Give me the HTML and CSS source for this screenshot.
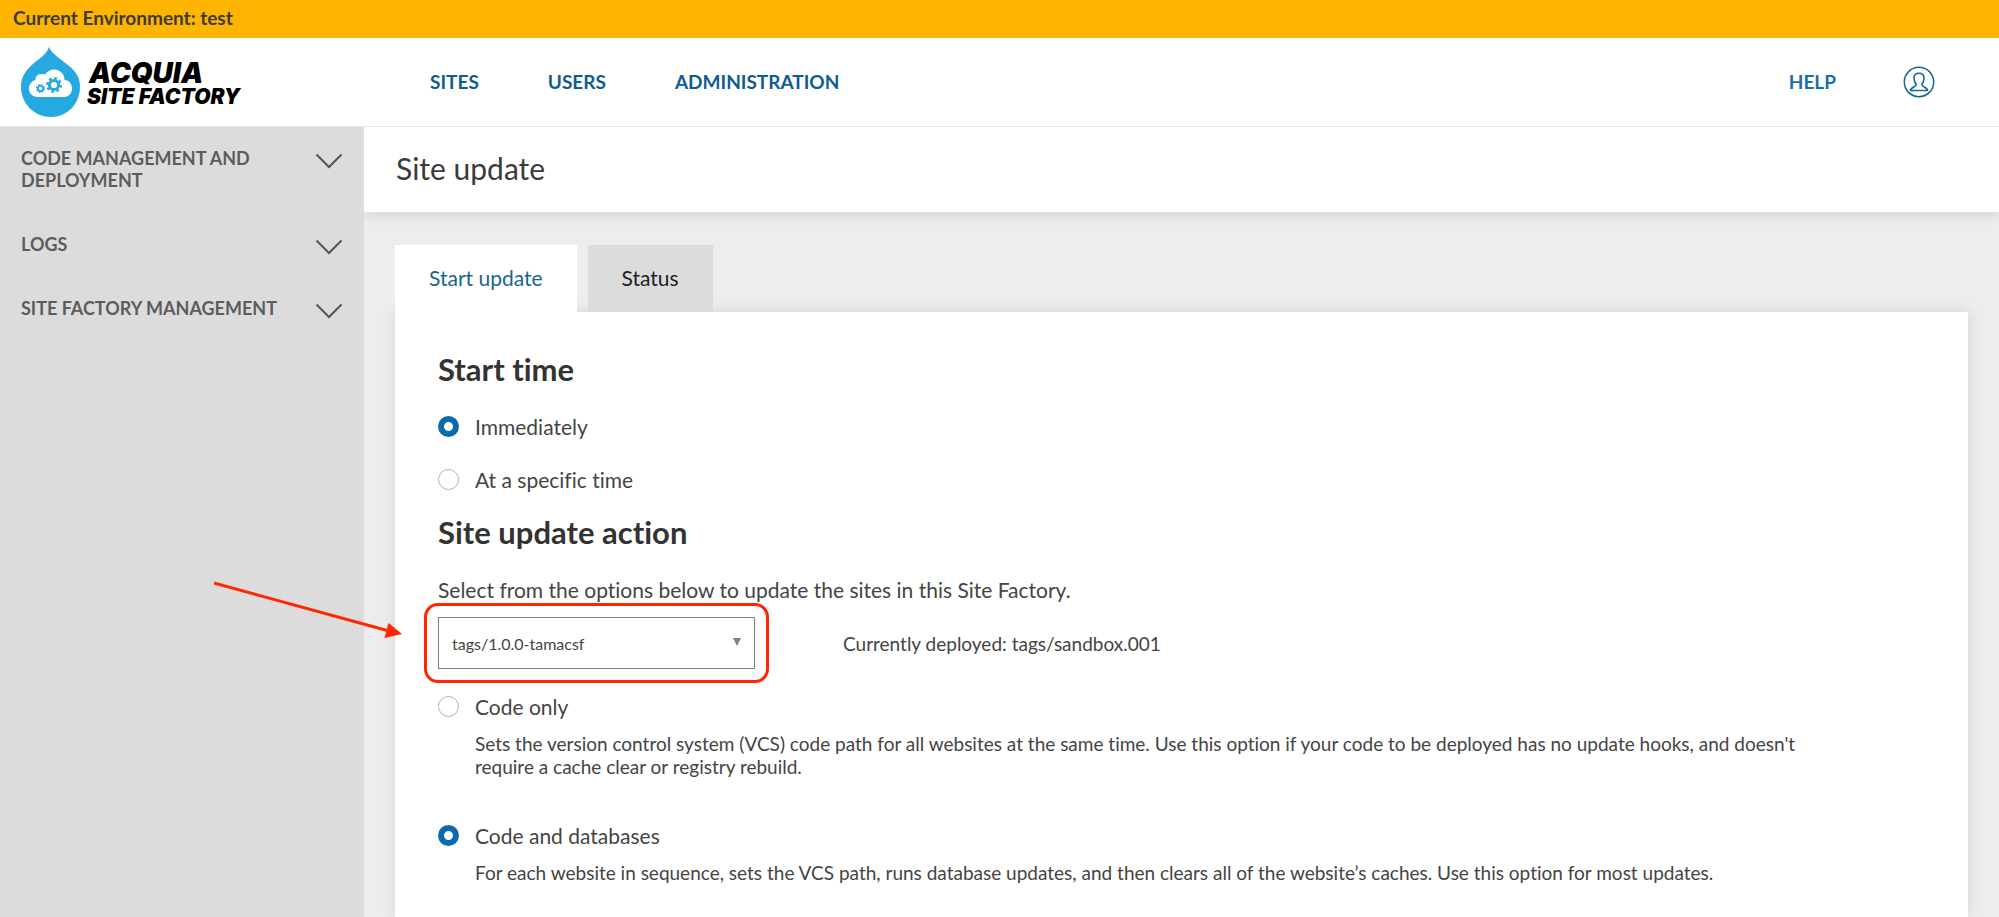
FILE: index.html
```html
<!DOCTYPE html>
<html lang="en">
<head>
<meta charset="utf-8">
<title>Site update</title>
<link rel="stylesheet" href="styles.css">
</head>
<body>
<div class="env-bar">Current Environment: test</div>
<header class="header">
  <a class="logo" href="#">
    <svg class="logo-mark" viewBox="0 0 60 70" aria-hidden="true">
      <path fill="#26a9e1" d="M28 0C30 5 34 8 43 15C54 23 59 29 59 40C59 57 46 70 30 70S0 57 0 40C0 29 5 23 14 15C22 9 26 6 28 0Z"/>
      <path fill="#fff" d="M17 50C11 50 8 46 8 41.500C8 37 11 34 14.500 33C14 29 18 25.500 24 27.500C26 24.500 29 22.500 33 22.500C39 22.500 43.500 27 43.500 33C48 33 51 37 51 41.500C51 46 48 50 43 50Z"/>
      <circle cx="33" cy="38" r="4.600" fill="none" stroke="#26a9e1" stroke-width="3"/>
      <circle cx="33" cy="38" r="6.600" fill="none" stroke="#26a9e1" stroke-width="2.600" stroke-dasharray="2.600 2.584"/>
      <circle cx="19.500" cy="41.500" r="2.600" fill="none" stroke="#26a9e1" stroke-width="1.800"/>
      <circle cx="19.500" cy="41.500" r="3.900" fill="none" stroke="#26a9e1" stroke-width="1.400" stroke-dasharray="1.600 1.463"/>
    </svg>
    <span class="logo-text"><span class="logo-brand">ACQUIA</span><span class="logo-product">SITE FACTORY</span></span>
  </a>
  <nav class="main-nav">
    <a href="#">SITES</a>
    <a href="#">USERS</a>
    <a href="#">ADMINISTRATION</a>
  </nav>
  <a class="help" href="#">HELP</a>
  <button class="account" type="button" aria-label="Account">
    <svg viewBox="0 0 32 32" fill="none" stroke="#1a6496" aria-hidden="true">
      <circle cx="16" cy="16" r="14.700" stroke-width="1.500"/>
      <path stroke-width="1.600" d="M13.300 18.500C11.500 16.500 11 14.500 11 12C11 8.500 13 7.300 16 7.300S21 8.500 21 12C21 14.500 20.500 16.500 18.700 18.500C18.700 21 24.500 21 24.500 24.500H7.500C7.500 21 13.300 21 13.300 18.500Z"/>
    </svg>
  </button>
</header>
<div class="body">
  <nav class="sidebar">
    <button type="button"><span>CODE MANAGEMENT AND DEPLOYMENT</span><svg viewBox="0 0 28 16" aria-hidden="true"><path d="M1.500 1.500L14 14L26.500 1.500"/></svg></button>
    <button type="button"><span>LOGS</span><svg viewBox="0 0 28 16" aria-hidden="true"><path d="M1.500 1.500L14 14L26.500 1.500"/></svg></button>
    <button type="button"><span>SITE FACTORY MANAGEMENT</span><svg viewBox="0 0 28 16" aria-hidden="true"><path d="M1.500 1.500L14 14L26.500 1.500"/></svg></button>
  </nav>
  <main class="main">
    <h1>Site update</h1>
    <div class="content">
      <div class="tabs">
        <a class="tab tab-active" href="#">Start update</a>
        <a class="tab" href="#">Status</a>
      </div>
      <form class="panel">
        <h2>Start time</h2>
        <label class="option"><input type="radio" name="time" checked>Immediately</label>
        <label class="option"><input type="radio" name="time">At a specific time</label>
        <h2>Site update action</h2>
        <label class="intro" for="tag">Select from the options below to update the sites in this Site Factory.</label>
        <div class="deploy">
          <div class="select-box">
            <select id="tag"><option>tags/1.0.0-tamacsf</option></select>
            <svg class="select-arrow" viewBox="0 0 8 8" aria-hidden="true"><path fill="#808080" d="M0 0H8L4 8Z"/></svg>
            <span class="callout"></span>
            <svg class="pointer" viewBox="0 0 190 58" aria-hidden="true">
              <path stroke="#ff2600" stroke-width="3" d="M1 3L176 51"/>
              <path fill="#ff2600" d="M189 54L171.500 58L175.500 43Z"/>
            </svg>
          </div>
          <span class="current">Currently deployed: tags/sandbox.001</span>
        </div>
        <label class="option"><input type="radio" name="action">Code only</label>
        <p>Sets the version control system (VCS) code path for all websites at the same time. Use this option if your code to be deployed has no update hooks, and doesn't require a cache clear or registry rebuild.</p>
        <label class="option"><input type="radio" name="action" checked>Code and databases</label>
        <p>For each website in sequence, sets the VCS path, runs database updates, and then clears all of the website’s caches. Use this option for most updates.</p>
      </form>
    </div>
  </main>
</div>
</body>
</html>
```
FILE: styles.css
```css
* { box-sizing: border-box; }
html { height: 100%; }
body {
  margin: 0;
  height: 100%;
  display: flex;
  flex-direction: column;
  overflow: hidden;
  font-family: Lato, "Open Sans", sans-serif;
  font-variant-ligatures: none;
  font-size: 21px;
  color: #444;
  background: #ededed;
}
a { text-decoration: none; color: #0f5c92; }
button { font: inherit; border: 0; background: none; padding: 0; }

.env-bar {
  flex: none;
  height: 38px;
  padding: 0 13px;
  font-size: 19px;
  line-height: 36px;
  font-weight: 700;
  color: #3b3b3b;
  background: #ffb400;
}
.header {
  flex: none;
  height: 89px;
  display: flex;
  align-items: center;
  padding: 0 64px 0 21px;
  background: #fff;
  border-bottom: 1px solid #e8e8e8;
  font-size: 19px;
  line-height: 24px;
  font-weight: 700;
}
.logo { display: flex; align-items: center; gap: 6px; width: 409px; color: #000; }
.logo-mark { width: 60px; height: 70px; }
.logo-text { display: flex; flex-direction: column; padding-top: 4px; font-family: Inter, Lato, sans-serif; font-style: italic; font-weight: 900; white-space: nowrap; }
.logo-brand { font-size: 28px; line-height: 26px; padding-left: 2px; }
.logo-product { font-size: 21px; line-height: 22px; }
.main-nav { display: flex; gap: 69px; flex: 1; padding-bottom: 1px; }
.account { width: 32px; height: 32px; margin-left: 67px; }
.account svg { display: block; }
.help { color: #1a6fa8; padding-bottom: 1px; }

.body { flex: 1; display: flex; min-height: 0; }
.sidebar { width: 364px; flex: none; background: #dcdcdc; }
.sidebar button {
  display: flex;
  justify-content: space-between;
  align-items: flex-start;
  width: 100%;
  padding: 20px 21px 22px 21px;
  font-size: 18px;
  line-height: 22px;
  font-weight: 700;
  text-align: left;
  color: #5c5c5c;
}
.sidebar span { max-width: 270px; }
.sidebar svg { width: 28px; height: 16px; margin-top: 6px; fill: none; stroke: #555; stroke-width: 2; }

.main { flex: 1; min-width: 0; display: flex; flex-direction: column; }
h1 {
  margin: 0;
  padding: 0 32px 2px;
  font-size: 30px;
  line-height: 83px;
  font-weight: 400;
  color: #3b3b3b;
  background: #fff;
  box-shadow: 0 2px 12px rgba(0, 0, 0, 0.12);
  clip-path: inset(0 0 -20px 0);
}
.content { flex: 1; display: flex; flex-direction: column; padding: 33px 31px 0; }
.tabs { display: flex; gap: 11px; position: relative; z-index: 1; }
.tab { height: 67px; padding: 0 34px; line-height: 65px; color: #222; background: #dcdcdc; }
.tab-active { color: #1a6496; background: #fff; }
.panel {
  flex: 1;
  padding: 36px 43px 0;
  background: #fff;
  box-shadow: 0 0 14px rgba(0, 0, 0, 0.1);
}
h2 { margin: 0; font-size: 31px; line-height: 42px; font-weight: 700; color: #333; }
.option { display: flex; align-items: center; gap: 16px; line-height: 21px; }
.option + .option { margin-top: 32px; }
h2 + .option { margin-top: 26px; }
.option + h2 { margin-top: 21px; }
.option input {
  appearance: none;
  width: 21px;
  height: 21px;
  margin: 0;
  border: 1px solid #b0b0b0;
  border-radius: 50%;
  background: #fff;
}
.option input:checked { border: 6px solid #0d6aad; }
.intro { display: block; margin-top: 25px; line-height: 24px; }
.deploy { display: flex; align-items: center; gap: 88px; margin-top: 15px; }
.select-box { position: relative; width: 317px; }
select {
  appearance: none;
  display: block;
  width: 100%;
  height: 52px;
  padding: 0 13px;
  border: 1px solid #808080;
  border-radius: 0;
  background: #fff;
  font: inherit;
  font-size: 16px;
  color: #444;
}
.select-arrow { position: absolute; right: 14px; top: 21px; width: 8px; height: 8px; }
.callout { position: absolute; inset: -14px; border: 3px solid #ff2600; border-radius: 14px; pointer-events: none; }
.pointer { position: absolute; left: -225px; top: -37px; width: 190px; height: 58px; fill: none; }
.current { font-size: 19px; }
.deploy + .option { margin-top: 27px; }
p { margin: 15px 0 0 37px; max-width: 1340px; font-size: 19px; line-height: 23px; }
p + .option { margin-top: 47px; }
```
